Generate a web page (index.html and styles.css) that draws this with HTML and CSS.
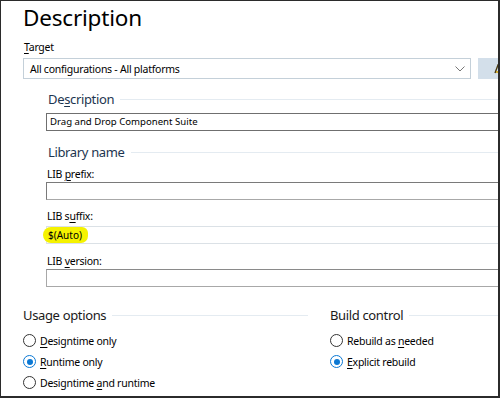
FILE: index.html
```html
<!DOCTYPE html>
<html>
<head>
<meta charset="utf-8">
<link rel="stylesheet" href="styles.css">
</head>
<body>
<div class="window">
  <h1 class="title">Description</h1>
  <div class="label target-label"><u>T</u>arget</div>
  <div class="target-row">
    <div class="combo">
      <span class="combo-text">All configurations - All platforms</span>
      <svg class="chev" width="10" height="6" viewBox="0 0 10 6"><path d="M0.5 0.5 L5 5 L9.5 0.5" fill="none" stroke="#777" stroke-width="1"/></svg>
    </div>
    <div class="side-btn"><svg class="btn-icon" width="8" height="10" viewBox="0 0 8 10"><path d="M1 9 L4 1 L7 9" fill="none" stroke="#4a3a10" stroke-width="1.4"/><path d="M2 8 L6 8" stroke="#d9a400" stroke-width="1.5"/></svg></div>
  </div>

  <div class="group">
    <div class="section first"><span>De<u>s</u>cription</span><i class="rule"></i></div>
    <div class="input dark">Drag and Drop Component Suite</div>

    <div class="section lib"><span>Library name</span><i class="rule"></i></div>
    <div class="label field-label l1">LIB <u>p</u>refix:</div>
    <div class="input dark2"></div>
    <div class="label field-label l2">LIB s<u>u</u>ffix:</div>
    <div class="input light"><span class="hl">$(Auto)</span></div>
    <div class="label field-label l3">LIB <u>v</u>ersion:</div>
    <div class="input mid"></div>
  </div>

  <div class="options">
    <div class="col usage">
      <div class="section opt"><span>Usage options</span><i class="rule"></i></div>
      <div class="radio"><i class="dot"></i><span><u>D</u>esigntime only</span></div>
      <div class="radio on"><i class="dot"></i><span><u>R</u>untime only</span></div>
      <div class="radio"><i class="dot"></i><span>Designtime <u>a</u>nd runtime</span></div>
    </div>
    <div class="col build">
      <div class="section opt"><span>Build control</span><i class="rule"></i></div>
      <div class="radio"><i class="dot"></i><span>Rebuild as <u>n</u>eeded</span></div>
      <div class="radio on"><i class="dot"></i><span><u>E</u>xplicit rebuild</span></div>
    </div>
  </div>
</div>
</body>
</html>
```

FILE: styles.css
```css
* { box-sizing: border-box; }
html, body { margin: 0; padding: 0; background: #fff; }
body { font-family: "Noto Sans", "Open Sans", sans-serif; color: #000; }

.window {
  width: 500px;
  height: 398px;
  border-style: solid;
  border-color: #2b2b2b;
  border-width: 1px 2px 2px 1px;
  overflow: hidden;
  padding-left: 22px;
  background: #fff;
}

u { text-decoration: underline; text-underline-offset: 2px; text-decoration-thickness: 1px; }

.title {
  margin: 0;
  font-weight: 400;
  font-size: 22.5px;
  line-height: 32px;
  height: 34px;
  padding-top: 1px;
  color: #000;
  letter-spacing: -0.2px;
}

.label { font-size: 10.5px; line-height: 16px; color: #000; letter-spacing: -0.25px; }
.target-label { margin-top: 4px; padding-left: 1px; height: 16px; }

.target-row {
  display: flex;
  gap: 7px;
  margin-top: 3px;
  height: 21px;
}
.combo {
  width: 448px;
  flex: none;
  height: 21px;
  border: 1px solid #c4d0d9;
  display: flex;
  align-items: center;
  padding-left: 6px;
  padding-right: 5px;
  font-size: 10.5px;
  letter-spacing: -0.25px;
}
.combo-text { flex: 1; white-space: nowrap; }
.chev { flex: none; }
.side-btn {
  flex: none;
  width: 40px;
  height: 21px;
  background: #d3dfea;
  padding-left: 16px;
  display: flex;
  align-items: center;
}
.btn-icon { flex: none; }

.group { padding-left: 23px; }

.section {
  display: flex;
  align-items: center;
  gap: 6px;
  font-size: 13px;
  height: 18px;
  line-height: 18px;
  color: #1d3550;
  padding-left: 2px;
  letter-spacing: -0.35px;
}
.section span { flex: none; }
.rule { flex: 1; height: 1px; background: #e4ebf1; margin-right: -60px; }
.section.first { margin-top: 11px; }

.input {
  height: 18px;
  width: 470px;
  font-size: 9.6px;
  line-height: 16px;
  padding-left: 3px;
  margin-top: 0;
  white-space: nowrap;
}
.input.dark { border: 1px solid #6f6f6f; margin-top: 5px; }
.input.dark2 { border: 1px solid #7a7a7a; border-bottom-color: #a8a8a8; }
.input.light { border: 1px solid #dbe1e6; margin-top: 2px; padding-left: 0; }
.input.mid { border: 1px solid #a8a8a8; border-top-color: #8a8a8a; }

.section.lib { margin-top: 12px; }
.field-label { height: 16px; padding-left: 1px; }
.l1 { margin-top: 5px; }
.l2 { margin-top: 8px; }
.l3 { margin-top: 9px; }

.hl {
  display: inline-block;
  background: #f5f200;
  border-radius: 8px 6px 7px 8px;
  padding: 0 6px 0 5px;
  margin-left: -4px;
  line-height: 16px;
  font-size: 10px;
}

.options {
  display: flex;
  margin-top: 19px;
}
.col { display: flex; flex-direction: column; }
.usage { width: 285px; }
.usage .section .rule { margin-right: 0; }
.build { margin-left: 22px; flex: 1; }
.section.opt { color: #1a1a1a; padding-left: 0; }
.build .section .rule { margin-right: -20px; }

.radio {
  display: flex;
  align-items: center;
  gap: 4px;
  font-size: 10.5px;
  letter-spacing: -0.25px;
  height: 21px;
}
.col .section + .radio { margin-top: 6px; }
.dot {
  width: 13px;
  height: 13px;
  border: 1px solid #333;
  border-radius: 50%;
  flex: none;
  position: relative;
}
.radio.on .dot { border-color: #0a78d4; }
.radio.on .dot::after {
  content: "";
  position: absolute;
  left: 2.5px; top: 2.5px;
  width: 6px; height: 6px;
  border-radius: 50%;
  background: #0a78d4;
}
```
